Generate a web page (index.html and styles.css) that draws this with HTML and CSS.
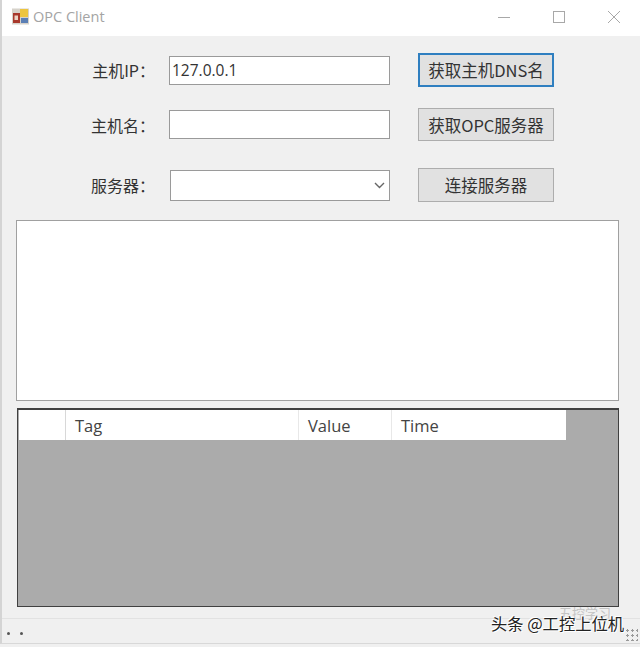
FILE: index.html
```html
<!DOCTYPE html>
<html lang="zh">
<head>
<meta charset="utf-8">
<title>OPC Client</title>
<link rel="stylesheet" href="styles.css">
</head>
<body>
<div class="window">
  <header class="titlebar">
    <svg class="app-icon" width="17" height="17" viewBox="0 0 17 17">
      <rect x="0" y="0.5" width="17" height="16" fill="#d6d2ca"/>
      <rect x="1" y="5" width="7" height="10" fill="#a8382c"/>
      <rect x="2.5" y="7.5" width="3.5" height="4.5" fill="#ecd3c4"/>
      <rect x="8" y="1" width="8" height="8" fill="#edc53f"/>
      <rect x="9" y="10" width="7" height="5" fill="#5b7fb5"/>
    </svg>
    <span class="title">OPC Client</span>
    <div class="controls">
      <svg class="ctl" width="14" height="14" viewBox="0 0 14 14"><path d="M1 7.5H13" stroke="#a8a8a8" stroke-width="1" fill="none"/></svg>
      <svg class="ctl" width="14" height="14" viewBox="0 0 14 14"><rect x="1.5" y="1.5" width="11" height="11" stroke="#a8a8a8" fill="none"/></svg>
      <svg class="ctl" width="14" height="14" viewBox="0 0 14 14"><path d="M1 1L13 13M13 1L1 13" stroke="#a8a8a8" stroke-width="1" fill="none"/></svg>
    </div>
  </header>

  <main class="content">
    <form class="form">
      <div class="row row-ip">
        <label class="label">主机IP：</label>
        <input class="field" type="text" value="127.0.0.1">
        <button class="btn btn-focus" type="button">获取主机DNS名</button>
      </div>
      <div class="row row-name">
        <label class="label">主机名：</label>
        <input class="field" type="text">
        <button class="btn" type="button">获取OPC服务器</button>
      </div>
      <div class="row row-server">
        <label class="label">服务器：</label>
        <div class="field combo">
          <svg width="11" height="7" viewBox="0 0 11 7"><path d="M1 1L5.5 5.5L10 1" stroke="#666" stroke-width="1.4" fill="none"/></svg>
        </div>
        <button class="btn" type="button">连接服务器</button>
      </div>
    </form>

    <div class="listbox"></div>

    <div class="grid-view">
      <div class="grid-head">
        <div class="cell cell-row"></div>
        <div class="cell cell-tag">Tag</div>
        <div class="cell cell-value">Value</div>
        <div class="cell cell-time">Time</div>
      </div>
    </div>
  </main>

  <footer class="statusbar">
    <span class="dots">
      <i class="dot"></i><i class="dot"></i>
    </span>
    <span class="grip"></span>
  </footer>
</div>
<div class="mark-ghost">五控学习</div>
<div class="mark">头条 @工控上位机</div>
</body>
</html>
```
FILE: styles.css
```css
* { box-sizing: border-box; }
html, body { margin: 0; padding: 0; }
body {
  width: 640px;
  height: 647px;
  overflow: hidden;
  background: #f0f0f0;
  font-family: "Noto Sans CJK SC", "Open Sans", sans-serif;
  color: #333;
  position: relative;
}
.window {
  height: 644px;
  display: flex;
  flex-direction: column;
  border-left: 2px solid #d4d4d4;
  border-bottom: 1px solid #d8d8d8;
  background: #f0f0f0;
}
.titlebar {
  height: 36px;
  flex: none;
  background: #fff;
  display: flex;
  align-items: center;
  padding-left: 10px;
}
.app-icon { flex: none; margin-top: -3px; }
.title {
  margin-left: 4px;
  font-family: "Open Sans", sans-serif;
  font-size: 14.5px;
  color: #a4a4a4;
  margin-top: -3px;
}
.controls {
  margin-left: auto;
  display: flex;
  align-items: center;
  gap: 41px;
  padding-right: 19px;
  margin-top: -3px;
}
.ctl { display: block; }
.content {
  flex: 1;
  display: flex;
  flex-direction: column;
  padding: 17px 0 0 14px;
}
.form { display: flex; flex-direction: column; height: 167px; }
.row {
  display: grid;
  grid-template-columns: 153px 221px 164px;
  align-items: center;
}
.row-ip { height: 34px; }
.row-name { height: 33px; margin-top: 21px; }
.row-server { height: 34px; margin-top: 27px; }
.label {
  font-size: 16px;
  color: #333;
  text-align: right;
  padding-right: 14px;
  white-space: nowrap;
}
.field {
  width: 221px;
  height: 29px;
  background: #fff;
  border: 1px solid #9a9a9a;
  border-radius: 0;
  padding: 0 2px;
  outline: none;
  font-family: "Open Sans", sans-serif;
  font-size: 15.5px;
  color: #333;
}
.combo {
  height: 31px;
  width: 220px;
  margin-left: 1px;
  display: flex;
  align-items: center;
  justify-content: flex-end;
  padding-right: 4px;
}
.btn {
  width: 136px;
  height: 100%;
  margin-left: 28px;
  background: #e1e1e1;
  border: 1px solid #adadad;
  border-radius: 0;
  padding: 0;
  font-family: "Noto Sans CJK SC", sans-serif;
  font-size: 16.5px;
  color: #333;
  white-space: nowrap;
}
.btn-focus { border: 2px solid #2f7fc0; }
.listbox {
  height: 181px;
  width: 603px;
  background: #fff;
  border: 1px solid #a0a0a0;
}
.grid-view {
  margin-top: 7px;
  margin-left: 1px;
  width: 602px;
  height: 199px;
  background: #ababab;
  border: 1px solid #404040;
  border-top-width: 2px;
  padding-left: 1px;
}
.grid-head {
  display: flex;
  height: 30px;
  width: 547px;
  background: #fff;
  font-family: "Open Sans", sans-serif;
  font-size: 16.5px;
  color: #444;
}
.cell {
  height: 100%;
  display: flex;
  align-items: center;
  padding-left: 9px;
  border-right: 1px solid #e8e8e8;
}
.cell-row { width: 47px; border-right-color: #d8d8d8; }
.cell-tag { width: 233px; }
.cell-value { width: 93px; }
.cell-time { width: 174px; border-right: 0; }
.statusbar {
  margin-top: 11px;
  height: 26px;
  flex: none;
  border-top: 1px solid #e2e2e2;
  display: flex;
  align-items: center;
  justify-content: space-between;
  padding: 0 2px 0 5px;
}
.dots { display: flex; gap: 10px; margin-top: 4px; }
.dot { width: 3px; height: 3px; border-radius: 50%; background: #555; display: block; }
.grip {
  width: 12px;
  height: 12px;
  margin-top: 6px;
  background-image: radial-gradient(circle at 1.5px 1.5px, #999 1.2px, transparent 1.4px);
  background-size: 5px 5px;
}
.mark, .mark-ghost {
  position: absolute;
  white-space: nowrap;
  font-family: "Noto Sans CJK SC", sans-serif;
}
.mark {
  left: 491px;
  top: 612px;
  font-size: 16.3px;
  line-height: 22px;
  color: #222;
  text-shadow: 1px 1px 0 #fff, -1px -1px 0 #fff;
}
.mark-ghost {
  left: 559px;
  top: 605px;
  font-size: 13px;
  line-height: 16px;
  color: #c4c4c4;
}
```
